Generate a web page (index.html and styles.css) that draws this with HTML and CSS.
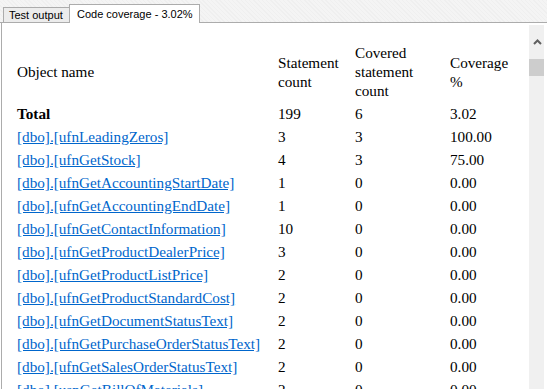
FILE: index.html
```html
<!DOCTYPE html>
<html>
<head>
<meta charset="utf-8">
<link rel="stylesheet" href="styles.css">
</head>
<body>
<div class="tabstrip">
  <div class="tabfill-left"></div>
  <div class="tab">Test output</div>
  <div class="tab active">Code coverage - 3.02%</div>
  <div class="tabfill"></div>
</div>
<div class="pane">
  <div class="content">
    <table class="cov">
      <colgroup>
        <col class="c1"><col class="c2"><col class="c3"><col class="c4">
      </colgroup>
      <thead>
        <tr>
          <th>Object name</th>
          <th>Statement<br>count</th>
          <th>Covered<br>statement<br>count</th>
          <th>Coverage<br>%</th>
        </tr>
      </thead>
      <tbody>
        <tr class="total"><td>Total</td><td>199</td><td>6</td><td>3.02</td></tr>
        <tr><td><a href="#">[dbo].[ufnLeadingZeros]</a></td><td>3</td><td>3</td><td>100.00</td></tr>
        <tr><td><a href="#">[dbo].[ufnGetStock]</a></td><td>4</td><td>3</td><td>75.00</td></tr>
        <tr><td><a href="#">[dbo].[ufnGetAccountingStartDate]</a></td><td>1</td><td>0</td><td>0.00</td></tr>
        <tr><td><a href="#">[dbo].[ufnGetAccountingEndDate]</a></td><td>1</td><td>0</td><td>0.00</td></tr>
        <tr><td><a href="#">[dbo].[ufnGetContactInformation]</a></td><td>10</td><td>0</td><td>0.00</td></tr>
        <tr><td><a href="#">[dbo].[ufnGetProductDealerPrice]</a></td><td>3</td><td>0</td><td>0.00</td></tr>
        <tr><td><a href="#">[dbo].[ufnGetProductListPrice]</a></td><td>2</td><td>0</td><td>0.00</td></tr>
        <tr><td><a href="#">[dbo].[ufnGetProductStandardCost]</a></td><td>2</td><td>0</td><td>0.00</td></tr>
        <tr><td><a href="#">[dbo].[ufnGetDocumentStatusText]</a></td><td>2</td><td>0</td><td>0.00</td></tr>
        <tr><td><a href="#">[dbo].[ufnGetPurchaseOrderStatusText]</a></td><td>2</td><td>0</td><td>0.00</td></tr>
        <tr><td><a href="#">[dbo].[ufnGetSalesOrderStatusText]</a></td><td>2</td><td>0</td><td>0.00</td></tr>
        <tr><td><a href="#">[dbo].[uspGetBillOfMaterials]</a></td><td>2</td><td>0</td><td>0.00</td></tr>
        <tr><td><a href="#">[dbo].[uspGetEmployeeManagers]</a></td><td>2</td><td>0</td><td>0.00</td></tr>
      </tbody>
    </table>
  </div>
  <div class="scrollbar">
    <div class="arrow">
      <svg width="9" height="6" viewBox="0 0 9 6"><path d="M1 5 L4.5 1.5 L8 5" fill="none" stroke="#606060" stroke-width="2"/></svg>
    </div>
    <div class="thumb"></div>
  </div>
</div>
</body>
</html>
```

FILE: styles.css
```css
html, body {
  margin: 0;
  padding: 0;
  background: #ffffff;
  overflow: hidden;
  width: 547px;
  height: 389px;
}

.tabstrip {
  display: flex;
  align-items: flex-end;
  height: 23px;
  background-color: #f4f4f4;
  background-image: repeating-linear-gradient(45deg, #efefef 0 1px, transparent 1px 3px);
  font-family: "Liberation Sans", Arial, sans-serif;
  font-size: 11px;
  color: #000;
}

.tabfill-left {
  width: 3px;
  height: 0;
  border-bottom: 1px solid #acacac;
}

.tab {
  box-sizing: border-box;
  width: 66px;
  height: 16px;
  padding: 0 0 0 5px;
  line-height: 14px;
  background: #ececec;
  border: 1px solid #acacac;
  border-right: none;
  white-space: nowrap;
}

.tab.active {
  width: 131px;
  height: 19px;
  padding: 2px 0 0 7px;
  line-height: 14px;
  background: #ffffff;
  border-bottom: none;
  border-right: 1px solid #acacac;
}

.tabfill {
  flex: 1;
  height: 0;
  border-bottom: 1px solid #acacac;
}

.pane {
  display: flex;
  height: 366px;
  margin-left: 1px;
  border-left: 1px solid #acacac;
  overflow: hidden;
}

.content {
  width: 527px;
  padding-left: 12px;
  box-sizing: border-box;
  overflow: hidden;
}

.cov {
  table-layout: fixed;
  width: 515px;
  margin-top: 17px;
  border-collapse: separate;
  border-spacing: 2px;
  font-family: "Liberation Serif", "Times New Roman", serif;
  font-size: 15.2px;
  line-height: 19px;
  color: #000;
}

.c1 { width: 259px; }
.c2 { width: 75px; }
.c3 { width: 93px; }
.c4 { width: 78px; }

.cov th,
.cov td {
  padding: 1px;
  text-align: left;
  white-space: nowrap;
}

.cov th {
  font-weight: normal;
  vertical-align: middle;
}

.cov .total td:first-child {
  font-weight: bold;
}

.cov a {
  color: #0066cc;
  text-decoration: underline;
}

.scrollbar {
  width: 15px;
  margin-top: 2px;
  margin-right: 3px;
  background: #f0f0f0;
  display: flex;
  flex-direction: column;
}

.arrow {
  height: 34px;
  display: flex;
  align-items: center;
  justify-content: center;
  padding-left: 1px;
}

.thumb {
  height: 17px;
  background: #cdcdcd;
}
```
